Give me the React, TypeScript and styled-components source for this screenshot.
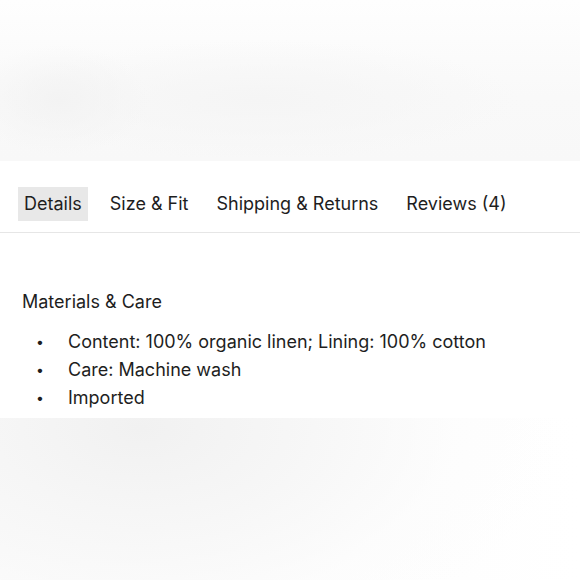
import React, { useState } from 'react'
import styled, { createGlobalStyle } from 'styled-components'

const GlobalStyle = createGlobalStyle`
  html, body {
    margin: 0;
    padding: 0;
    background: #ffffff;
  }
  body {
    font-family: Inter, 'Noto Sans', 'Liberation Sans', sans-serif;
    color: #1e1e1e;
    -webkit-font-smoothing: antialiased;
  }
`

const Page = styled.div`
  width: 580px;
  height: 580px;
  overflow: hidden;
  display: flex;
  flex-direction: column;
`

const HeroBlur = styled.div`
  height: 161px;
  flex-shrink: 0;
  background:
    radial-gradient(ellipse 90px 55px at 60px 100px, #f3f3f3 0%, rgba(243, 243, 243, 0) 100%),
    radial-gradient(ellipse 260px 60px at 260px 100px, #f5f5f5 0%, rgba(245, 245, 245, 0) 100%),
    linear-gradient(180deg, #fefefe 0%, #f9f9f9 60%, #f8f8f8 100%);
`

const TabBar = styled.nav`
  display: flex;
  align-items: center;
  gap: 16px;
  padding: 26px 18px 11px;
  border-bottom: 1.5px solid #e6e6e6;
`

const Tab = styled.button<{ active: boolean }>`
  font: inherit;
  font-size: 18px;
  line-height: 34px;
  height: 34px;
  padding: 0 6px;
  border: none;
  border-radius: 0;
  color: #1e1e1e;
  background: ${props => (props.active ? '#e8e8e8' : 'transparent')};
  cursor: pointer;
`

const Content = styled.section`
  padding: 57px 22px 0;
  height: 185px;
  box-sizing: border-box;
`

const Heading = styled.h3`
  margin: 0 0 14px;
  font-size: 18px;
  font-weight: 400;
  line-height: 24px;
`

const List = styled.ul`
  margin: 0;
  padding: 0;
  list-style: none;
`

const Item = styled.li`
  display: flex;
  font-size: 18px;
  line-height: 28px;

  &::before {
    content: '•';
    flex-shrink: 0;
    width: 46px;
    padding-left: 14px;
    box-sizing: border-box;
    font-size: 14px;
  }
`

const FooterBlur = styled.div`
  flex: 1;
  background:
    radial-gradient(ellipse 420px 240px at 140px 10px, #f1f1f1 0%, #f6f6f6 35%, rgba(252, 252, 252, 0.6) 75%, rgba(255, 255, 255, 0) 100%),
    linear-gradient(90deg, #f9f9f9 0%, #fdfdfd 60%, #ffffff 100%);
`

const tabs = ['Details', 'Size & Fit', 'Shipping & Returns', 'Reviews (4)']

const details = [
  'Content: 100% organic linen; Lining: 100% cotton',
  'Care: Machine wash',
  'Imported',
]

const App: React.FC = () => {
  const [active, setActive] = useState('Details')

  return (
    <Page>
      <GlobalStyle />
      <HeroBlur />
      <TabBar>
        {tabs.map(tab => (
          <Tab key={tab} active={tab === active} onClick={() => setActive(tab)}>
            {tab}
          </Tab>
        ))}
      </TabBar>
      <Content>
        <Heading>Materials &amp; Care</Heading>
        <List>
          {details.map(d => (
            <Item key={d}>{d}</Item>
          ))}
        </List>
      </Content>
      <FooterBlur />
    </Page>
  )
}

export default App
